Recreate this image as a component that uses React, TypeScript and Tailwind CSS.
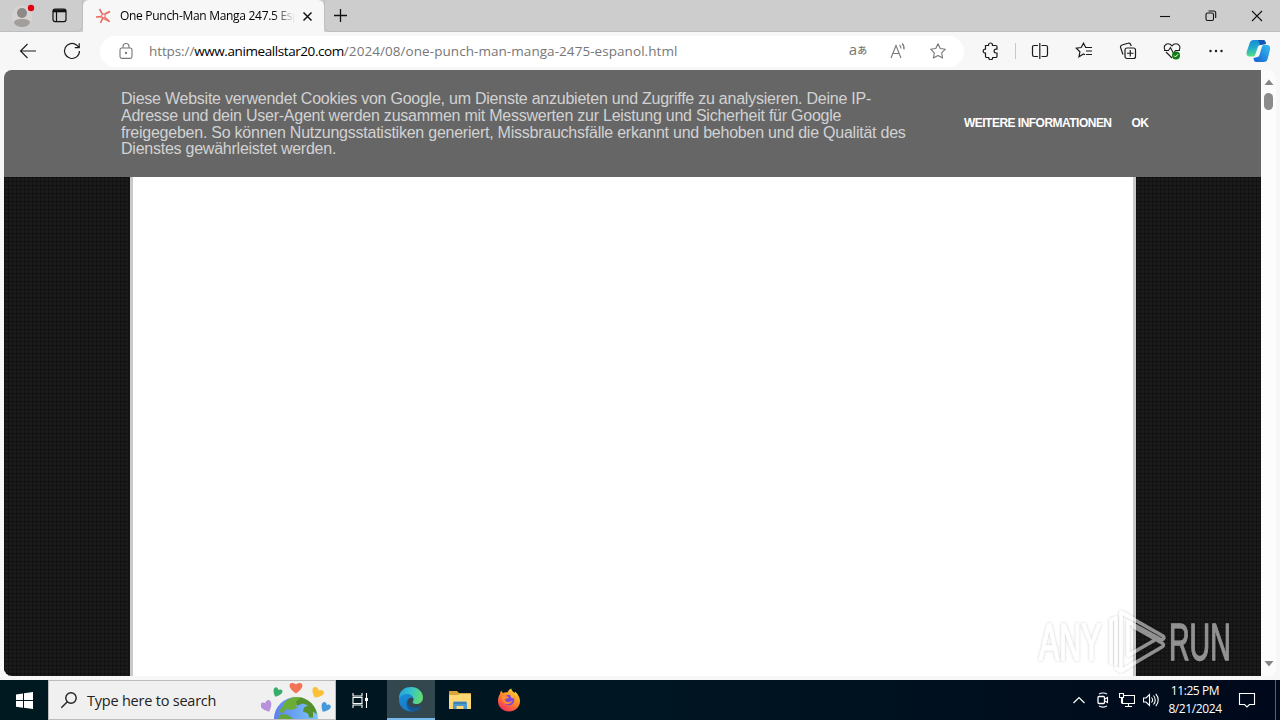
import type { ReactNode } from "react";

type IconProps = {
  size?: number;
  className?: string;
  children: ReactNode;
};

function Icon({ size = 18, className = "", children }: IconProps) {
  return (
    <svg
      width={size}
      height={size}
      viewBox={`0 0 ${size} ${size}`}
      fill="none"
      stroke="currentColor"
      strokeWidth="1.1"
      className={`shrink-0 ${className}`}
    >
      {children}
    </svg>
  );
}

function ToolButton({ children }: { children: ReactNode }) {
  return <div className="flex h-full w-11 shrink-0 items-center justify-center">{children}</div>;
}

function TitleBar() {
  return (
    <div className="flex h-8 bg-[#cdcdcd] text-[#111]">
      <div className="flex w-[83px] items-center rounded-br-md border-r border-b border-[#bebebe]">
        <svg width="24" height="24" viewBox="0 0 24 24" className="ml-[11px]">
          <circle cx="11" cy="12" r="10.5" fill="#d6d3d1" />
          <circle cx="11" cy="9" r="5" fill="#8c8987" />
          <path d="M3 19c0-3 3-4 8-4s8 1 8 4c-2 3-5 4-8 4s-6-1-8-4z" fill="#a19e9c" />
          <circle cx="20" cy="4" r="3.2" fill="#e1000f" />
        </svg>
        <svg width="15" height="15" viewBox="0 0 15 15" fill="none" stroke="#111" className="ml-[17px]">
          <rect x="1" y="1" width="13" height="12.6" rx="2" strokeWidth="1.2" />
          <path d="M1 2.8h13" strokeWidth="3" />
          <path d="M4.5 3v10.5" strokeWidth="1.2" />
        </svg>
      </div>
      <div className="flex w-[241px] items-center rounded-t-md bg-[#f7f7f7]">
        <svg width="16" height="16" viewBox="0 0 16 16" fill="none" stroke="#ea6a60" strokeWidth="1.6" className="ml-3">
          <path d="M4.500 1 7.200 5.800M1 9l5.600-.4M5.500 15l2.300-5M14.500 13.500 10 9.500M15 3.500 10 6" />
          <path d="M7.200 5.800 10 6l4.500-2.500M6.600 8.600 7.200 5.800M7.800 10.200 6.600 8.600M10 9.500l-2.200.7 6.700 3.500M10 6v3.500" strokeWidth="1.100" />
        </svg>
        <div className="ml-[9px] w-[175px] bg-gradient-to-r from-black from-85% to-[#f7f7f7] bg-clip-text font-['Open_Sans','Noto_Sans',sans-serif] text-[12px] tracking-[-0.3px] whitespace-nowrap text-transparent">
          One Punch-Man Manga 247.5 Esp
        </div>
        <Icon size={11} className="ml-[7px]">
          <path d="m1.5 1.5 8 8m0-8-8 8" strokeWidth="1.5" />
        </Icon>
      </div>
      <div className="flex flex-1 items-center rounded-bl-md border-b border-l border-[#bebebe]">
        <Icon size={15} className="ml-2">
          <path d="M7.5 1v13M1 7.5h13" strokeWidth="1.3" />
        </Icon>
        <div className="ml-auto flex">
          <div className="flex w-[46px] justify-center">
            <Icon size={12}>
              <path d="M1 6.5h10" />
            </Icon>
          </div>
          <div className="flex w-[46px] justify-center">
            <Icon size={12}>
              <rect x="1" y="3" width="7.5" height="7.5" rx="1.5" />
              <path d="M3.5 1h5.2c1.4 0 2 .7 2 2v5" />
            </Icon>
          </div>
          <div className="flex w-[46px] justify-center">
            <Icon size={12}>
              <path d="m1 1 10 10m0-10L1 11" />
            </Icon>
          </div>
        </div>
      </div>
    </div>
  );
}

function AddressBar() {
  return (
    <div className="ml-1.5 flex h-[31px] w-[864px] shrink-0 items-center rounded-full bg-white text-[#777]">
      <Icon size={18} className="ml-[17px]">
        <rect x="3" y="6" width="12" height="10.4" rx="1.8" />
        <path d="M6 6V4.5a3 3 0 0 1 6 0V6" />
        <circle cx="9" cy="11" r=".6" fill="currentColor" />
      </Icon>
      <div className="ml-3.5 font-['Open_Sans','Noto_Sans',sans-serif] text-[13.5px] whitespace-nowrap">
        <span className="tracking-[-0.1px]">https://</span>
        <span className="tracking-[-0.42px] text-black">www.animeallstar20.com</span>
        <span className="tracking-[0.06px]">/2024/08/one-punch-man-manga-2475-espanol.html</span>
      </div>
      <div className="ml-auto flex w-[126px] items-center">
        <div className="flex w-10 items-center justify-center pb-1 font-['Open_Sans','Noto_Sans_CJK_JP',sans-serif] leading-none">
          <span className="text-[15px]">a</span>
          <span className="pt-0.5 text-[10px] font-medium">あ</span>
        </div>
        <div className="flex w-10 justify-center">
          <Icon size={18}>
            <path d="m2 16 5-12.5L12 16M3.8 11.5h6.4M10.5 3c1 .8 1.5 2 1.4 3.5M13 1.5c1.8 1.6 2.4 3.8 2 6" />
          </Icon>
        </div>
        <div className="flex w-10 justify-center">
          <Star />
        </div>
      </div>
    </div>
  );
}

function Star() {
  return (
    <Icon size={18}>
      <path d="m9 1.7 2.25 4.8 5.15.7-3.75 3.6.95 5.2L9 13.5 4.4 16l.95-5.2L1.6 7.2l5.15-.7z" strokeLinejoin="round" />
    </Icon>
  );
}

function Copilot() {
  return (
    <svg width="25" height="24" viewBox="0 0 25 24">
      <defs>
        <linearGradient id="cpA" x1="0" y1="0" x2="0.2" y2="1">
          <stop offset="0" stopColor="#1389d8" />
          <stop offset=".5" stopColor="#22a9cb" />
          <stop offset="1" stopColor="#55df86" />
        </linearGradient>
        <linearGradient id="cpB" x1="1" y1="0" x2="0" y2="1">
          <stop offset="0" stopColor="#35c0f2" />
          <stop offset=".6" stopColor="#2385dc" />
          <stop offset="1" stopColor="#1762d4" />
        </linearGradient>
      </defs>
      <path d="M8 1h9c2 0 2.4 1.5 3 4l-5 1c-2 0-3 1-3.5 3l-2 6c-.6 2-1.5 2.5-3 2.5H4c-3 0-4-2-3.2-5L3.5 4.5C4.2 2 5.6 1 8 1z" fill="url(#cpA)" />
      <path d="M12 1h5c2 0 2.4 1.5 3 4l-6 1z" fill="#1358b8" />
      <path d="M17.5 23h-7c-2.3 0-2.6-1.5-3-4l3-.8c1.8 0 2.7-1.2 3.2-3l2-6.8c.5-1.8 1.4-2.4 3-2.4h2c3 0 4 2 3.2 5l-2 8c-.7 3-2 4-4.4 4z" fill="url(#cpB)" />
    </svg>
  );
}

function Toolbar() {
  return (
    <div className="flex h-[38px] items-center bg-[#f7f7f7] pl-1.5 text-[#1b1b1b]">
      <ToolButton>
        <Icon size={18}>
          <path d="M17 9H1.5M8.5 2l-7 7 7 7" />
        </Icon>
      </ToolButton>
      <ToolButton>
        <Icon size={18}>
          <path d="M16.5 9A7.5 7.5 0 1 1 13.8 3.2L16 5.4M16.2 1.2v4.4h-4.4" strokeWidth="1.2" />
        </Icon>
      </ToolButton>
      <AddressBar />
      <div className="ml-[5px] flex h-full items-center">
        <ToolButton>
          <Icon size={18}>
            <path
              d="M3.500 3.500h3V3a2 2 0 0 1 4 0v.5h3.200c.7 0 1.300.6 1.300 1.300v2.400h-1a1.900 1.900 0 0 0 0 3.800h1v3.200c0 .7-.6 1.300-1.300 1.300h-3v.3a2 2 0 0 1-4 0v-.3H4.800c-.7 0-1.300-.6-1.300-1.300v-3h-.3a2 2 0 0 1 0-4h.3z"
              strokeWidth="1.2"
            />
          </Icon>
        </ToolButton>
        <div className="mx-[2px] h-4 w-px bg-[#c8c8c8]" />
        <ToolButton>
          <Icon size={18}>
            <path d="M7 3.5H3.2C2 3.5 1.5 4 1.5 5.2v7.6c0 1.2.5 1.7 1.7 1.7H7M10.500 3.500h4.300c1.200 0 1.700.5 1.700 1.700v7.600c0 1.200-.5 1.700-1.700 1.700h-4.300M8.800 1v16" strokeWidth="1.2" />
          </Icon>
        </ToolButton>
        <ToolButton>
          <Icon size={18}>
            <path d="M10 12.8 8.500 12 4 14.800l.9-5L1.200 6.200l5-.7L8.500 1.200l2.200 4.300h6.300M11 9h6M11 12.500h6" strokeWidth="1.2" />
          </Icon>
        </ToolButton>
        <ToolButton>
          <Icon size={18}>
            <rect x="6" y="6" width="10.500" height="10.500" rx="2" strokeWidth="1.2" />
            <path d="M11.250 8v6.500M8 11.250h6.500M4 12.500 1.600 5.600C1.200 4.200 1.600 3.500 3 3l6-1.700c1.500-.5 2.200 0 2.700 1.200l.5 1.500" strokeWidth="1.2" />
          </Icon>
        </ToolButton>
        <ToolButton>
          <Icon size={18}>
            <path d="M9 16 3 10M2 8C0 4.500 2.500 1.800 5 1.800c1.700 0 3 .8 4 2 1-1.200 2.300-2 4-2 3 0 5 3 3.200 6.200M1 8.500h4.500l2-3 3 6 2-3H17" strokeWidth="1.1" />
            <circle cx="13" cy="13.500" r="4" fill="#117b12" stroke="none" />
            <path d="m11 13.500 1.400 1.500 2.700-2.900" stroke="white" strokeWidth="1" />
          </Icon>
        </ToolButton>
        <ToolButton>
          <Icon size={18}>
            <g fill="currentColor" stroke="none">
              <circle cx="3.500" cy="9" r="1.200" />
              <circle cx="9" cy="9" r="1.200" />
              <circle cx="14.500" cy="9" r="1.200" />
            </g>
          </Icon>
        </ToolButton>
        <div className="flex w-10 justify-center">
          <Copilot />
        </div>
      </div>
    </div>
  );
}

function CookieBanner() {
  return (
    <div className="flex h-[107px] shrink-0 bg-[#666] font-['Liberation_Sans',Arial,sans-serif]">
      <p className="mt-[21px] ml-[117px] w-[800px] text-[16px] leading-[16.8px] tracking-[-0.24px] whitespace-nowrap text-[#d2d2d2]">
        Diese Website verwendet Cookies von Google, um Dienste anzubieten und Zugriffe zu analysieren. Deine IP-
        <br />
        Adresse und dein User-Agent werden zusammen mit Messwerten zur Leistung und Sicherheit für Google
        <br />
        freigegeben. So können Nutzungsstatistiken generiert, Missbrauchsfälle erkannt und behoben und die Qualität des
        <br />
        Dienstes gewährleistet werden.
      </p>
      <div className="ml-[43px] flex items-center pb-0.5 text-[12px] font-bold whitespace-nowrap text-white">
        <a className="tracking-[-0.52px]">WEITERE INFORMATIONEN</a>
        <a className="ml-5 tracking-[-0.5px]">OK</a>
      </div>
    </div>
  );
}

function Watermark() {
  return (
    <svg width="200" height="70" viewBox="0 0 200 70" className="absolute right-[41px] bottom-0">
      <defs>
        <filter id="wmShadow" x="-10%" y="-20%" width="120%" height="140%">
          <feDropShadow dx="0" dy="0" stdDeviation="1.8" floodColor="#000" floodOpacity=".4" />
        </filter>
      </defs>
      <g filter="url(#wmShadow)" opacity=".53" fill="#fff" stroke="#fff">
        <g fontFamily="'Liberation Sans Narrow', 'Liberation Sans', sans-serif" fontSize="52" strokeWidth="1.3">
          <text transform="translate(4 53.500) scale(.6 1)" textLength="104" lengthAdjust="spacingAndGlyphs">
            ANY
          </text>
          <text transform="translate(134 53.500) scale(.6 1)" textLength="103" lengthAdjust="spacingAndGlyphs">
            RUN
          </text>
        </g>
        <path
          d="M76 57V14l5-2v46M86 64V6l42 24c2 2 0 5-3 3L93 15.500v34l26-15M99 21l28 16c2 1 2 3 0 4L86 65l-5-3"
          fill="none"
          strokeWidth="3.400"
          strokeLinejoin="round"
          strokeLinecap="round"
        />
      </g>
    </svg>
  );
}

const darkTexture =
  "bg-[#1b1b1b] bg-[linear-gradient(#111_1px,transparent_1px),linear-gradient(90deg,#121212_1px,transparent_1px)] bg-[size:4px_4px]";

function PageView() {
  return (
    <div className="flex h-[610px] bg-[#f7f7f7] px-1 pb-1">
      <div className="relative flex flex-1 overflow-hidden rounded-lg bg-[#fcfcfc]">
        <div className="flex w-[1257px] flex-col">
          <CookieBanner />
          <div className={`flex flex-1 ${darkTexture}`}>
            <div className="ml-[126px] w-[1006px] border-x-[3px] border-[#c9c9c9] bg-white" />
          </div>
        </div>
        <div className="flex w-[15px] flex-col items-center pt-[9px] pb-[9px]">
          <svg width="10" height="6" viewBox="0 0 10 6">
            <path d="M5 .5 9.500 6h-9z" fill="#858585" />
          </svg>
          <div className="mt-2 h-[17px] w-[9px] rounded-full bg-[#8b8b8b]" />
          <svg width="10" height="6" viewBox="0 0 10 6" className="mt-auto">
            <path d="M5 5.500 9.500 0h-9z" fill="#858585" />
          </svg>
        </div>
        <Watermark />
      </div>
    </div>
  );
}

function SearchArt() {
  const heart = "M0 3.500C-5-.5-4.300-4-2.200-4c1.200 0 1.900.6 2.200 1.300C.3-3.400 1-4 2.200-4c2.100 0 2.800 3.500-2.200 7.500z";
  return (
    <svg width="74" height="38" viewBox="0 0 74 38" className="ml-auto">
      <defs>
        <linearGradient id="globe">
          <stop offset="0" stopColor="#5b80eb" />
          <stop offset="1" stopColor="#7cc9fb" />
        </linearGradient>
      </defs>
      <circle cx="35" cy="38" r="22" fill="url(#globe)" />
      <path d="M24 21c5-5 11-6 18-4-3 2 0 5-3 6l-4 1 1 3-6 2-5-1-3 4-4-1c1-3 3-5 5-6-1-2 0-3 1-4z" fill="#6cad37" />
      <path d="M40 16.500c9 2 15 9 16 17l-4-3 0 6h-4l-1-4-5-2 1-4 4-2-5-2-6 2-1-4z" fill="#55902a" />
      <path d="M19 34c5-2 9 0 13 4H17z" fill="#64a637" />
      <path d={heart} transform="translate(35 7.500) scale(1.700 1.400)" fill="#f27457" />
      <path d={heart} transform="translate(16 12) rotate(25) scale(1.200)" fill="#38ad69" />
      <path d={heart} transform="translate(56 12.500) rotate(28) scale(1.600 1.300)" fill="#fac036" />
      <path d={heart} transform="translate(6 26) rotate(-25) scale(1.500)" fill="#b791dc" />
      <path d={heart} transform="translate(64 27) rotate(30) scale(1.250)" fill="#4598dc" />
    </svg>
  );
}

function EdgeLogo() {
  return (
    <svg width="26" height="26" viewBox="0 0 26 26">
      <defs>
        <linearGradient id="edgeTop" x1="0" y1="0" x2="1" y2=".2">
          <stop offset="0" stopColor="#239fdc" />
          <stop offset=".5" stopColor="#34c1cf" />
          <stop offset="1" stopColor="#60dc73" />
        </linearGradient>
        <linearGradient id="edgeLow" x1="0" y1="0" x2=".7" y2="1">
          <stop offset="0" stopColor="#1b91da" />
          <stop offset="1" stopColor="#1672c2" />
        </linearGradient>
      </defs>
      <path d="M1 11C2 4 7 1 13 1c7 0 12 5 12 10.500 0 4-3 6.500-6.500 6.500-3 0-4.500-1-3.500-2.500 2-3-1-6.500-5-6.500-4 0-8 2-9 5z" fill="url(#edgeTop)" />
      <path d="M1 14c0-4 4-6 8-6 3.500 0 6 2 6 4-4-1-6.500 2-5.500 6 1 5 7 6 13 3-2 3-5.500 4.500-9.500 4.500C6 25.500 1 20 1 14z" fill="url(#edgeLow)" />
      <path d="M10 13c-2 4 1 8 6 8.500 3 .2 5-.5 7-1.500-2 4-5 5.500-9 5.500-5-2-7-8-4-12.500z" fill="#145796" />
    </svg>
  );
}

function ExplorerLogo() {
  return (
    <svg width="22" height="20" viewBox="0 0 22 20">
      <path d="M0 2c0-.7.3-1 1-1h7l2 2h11c.7 0 1 .3 1 1v15H0z" fill="#dba33a" />
      <path d="M0 5h9l2-1h11v15H0z" fill="#ffd775" />
      <path d="M4 19v-6c0-1 .5-1.500 1.500-1.500h11c1 0 1.500.5 1.500 1.500v6h-3.500v-3h-7v3z" fill="#4c9ad0" />
      <path d="M5 12h12v2H5z" fill="#3b82b5" />
    </svg>
  );
}

function FirefoxLogo() {
  return (
    <svg width="24" height="24" viewBox="0 0 24 24">
      <defs>
        <linearGradient id="ffBody" x1=".8" y1="0" x2=".2" y2="1">
          <stop offset="0" stopColor="#ffdf3b" />
          <stop offset=".45" stopColor="#ff8b27" />
          <stop offset="1" stopColor="#f12762" />
        </linearGradient>
      </defs>
      <path d="M3 6c0-1.500.7-2.700 1.500-3.500.2 1.200.7 1.800 1.500 2.500 1.500-.7 3-.8 4.500-.5C11 2.500 12.700 1 14.500.5c-.5 2 1.500 3 3 4.500L18 3.500c3 2.500 5 6 5 9.500 0 6-5 10.500-11 10.500S1 19 1 13c0-3 .7-5 2-7z" fill="url(#ffBody)" />
      <circle cx="12" cy="12" r="5.300" fill="#8047d9" />
      <path d="M5 8c3-1 6 0 7 2-2 0-4 1-4 2.200 1.200 2.500 5 2.300 7.500 0-.5 3.500-5 5-8 3C5 13.500 4.500 11 5 8z" fill="#ff8a35" />
      <path d="M13 6c2 .8 3.500 2.500 4 5-1-1-2-1.500-3-1.500z" fill="#ffb532" />
    </svg>
  );
}

function Taskbar() {
  return (
    <div className="flex h-10 bg-gradient-to-r from-[#001820] via-[#001622] to-[#00091b] text-white">
      <div className="flex w-12 items-center justify-center">
        <svg width="17" height="17" viewBox="0 0 17 17" fill="white">
          <path d="M0 2.400 7 1.400v6.700H0zM8 1.200 17 0v8.100H8zM0 9.100h7v6.700l-7-1zM8 9.100h9V17l-9-1.200z" />
        </svg>
      </div>
      <div className="flex h-10 w-72 items-center border border-[#bcbcbc] bg-[#f0f0f0] text-[#222]">
        <Icon size={18} className="ml-[11px]">
          <circle cx="11" cy="7" r="5.200" strokeWidth="1.4" />
          <path d="m7.300 10.700-6 6" strokeWidth="1.4" />
        </Icon>
        <span className="ml-[9px] pt-px font-['Open_Sans','Noto_Sans',sans-serif] text-[14.500px] tracking-[-0.22px] whitespace-nowrap">
          Type here to search
        </span>
        <SearchArt />
      </div>
      <div className="flex w-[51px] items-center pl-4">
        <Icon size={17}>
          <path d="M1 1v3h9V1M1 16v-3h9v3M1 5.500h9v6H1zM14.500 1v15" />
          <path d="M13 6h3v3h-3z" fill="white" stroke="none" />
        </Icon>
      </div>
      <div className="flex w-12 items-center justify-center border-b-2 border-[#76b9ed] bg-[#33474f]">
        <EdgeLogo />
      </div>
      <div className="flex w-[49px] items-center justify-center">
        <ExplorerLogo />
      </div>
      <div className="flex w-[49px] items-center justify-center">
        <FirefoxLogo />
      </div>
      <div className="ml-auto flex">
        <div className="flex items-center gap-2">
          <Icon size={16}>
            <path d="m2.500 11 5.500-5.500 5.500 5.500" strokeWidth="1.2" />
          </Icon>
          <Icon size={16}>
            <rect x="3" y="4.500" width="6.500" height="7" rx="1" strokeWidth="1.3" />
            <path d="m10 7 2.500-1.500v5L10 9M4 2.200C6 .5 10 .5 12 2.200M4 13.800c2 1.700 6 1.700 8 0" />
          </Icon>
          <Icon size={16}>
            <path d="M5 3.500h10.500v8H3.500V6M.5 1.500h4v4h-4zM2.500 5.500v6M9.500 11.500v3M6 14.500h7" />
          </Icon>
          <Icon size={16}>
            <path d="M.5 6v4H3l3.500 3.500v-11L3 6zM8.500 5.500c1.300 1.500 1.300 3.500 0 5M10.500 3.500c2.300 2.500 2.300 6.500 0 9M12.800 1.800c3.200 3.700 3.200 8.700 0 12.400" />
          </Icon>
        </div>
        <div className="ml-1 flex w-16 flex-col items-center justify-center font-['Open_Sans','Noto_Sans',sans-serif] text-[12px] leading-[18px] tracking-[-0.4px] whitespace-nowrap">
          <span>11:25 PM</span>
          <span>8/21/2024</span>
        </div>
        <div className="flex w-12 items-center pl-[11px]">
          <Icon size={18}>
            <path d="M1.500 2.500h15v11h-5L9 16l-2.500-2.500h-5z" />
          </Icon>
        </div>
        <div className="mr-1 w-px bg-[#5a6070]" />
      </div>
    </div>
  );
}

export default function App() {
  return (
    <div className="flex h-[720px] w-[1280px] flex-col overflow-hidden bg-[#f7f7f7]">
      <TitleBar />
      <Toolbar />
      <PageView />
      <Taskbar />
    </div>
  );
}
